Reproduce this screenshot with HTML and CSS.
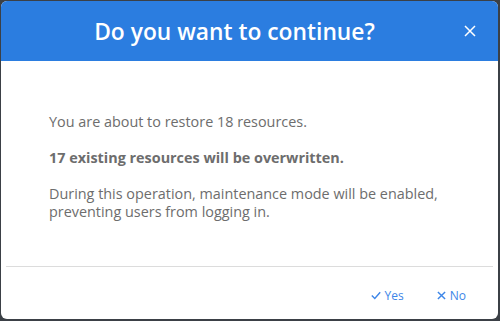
FILE: index.html
```html
<!DOCTYPE html>
<html>
<head>
<meta charset="utf-8">
<link rel="stylesheet" href="styles.css">
</head>
<body>
<div class="dialog">
  <div class="header">
    <div class="title">Do you want to continue?</div>
    <button class="close" aria-label="Close">
      <svg width="12" height="12" viewBox="0 0 12 12"><path d="M1 1L11 11M11 1L1 11" stroke="#fff" stroke-width="1.5" fill="none"/></svg>
    </button>
  </div>
  <div class="content">
    <p>You are about to restore 18 resources.</p>
    <p class="strong">17 existing resources will be overwritten.</p>
    <p>During this operation, maintenance mode will be enabled, preventing users from logging in.</p>
  </div>
  <div class="footer">
    <button class="btn">
      <svg width="10" height="9" viewBox="0 0 10 9"><path d="M0.8 4.5L3.8 7.5L9.2 1.2" stroke="currentColor" stroke-width="1.4" fill="none"/></svg>
      Yes
    </button>
    <button class="btn">
      <svg width="9" height="9" viewBox="0 0 10 10"><path d="M1 1L9 9M9 1L1 9" stroke="currentColor" stroke-width="1.6" fill="none"/></svg>
      No
    </button>
  </div>
</div>
</body>
</html>
```

FILE: styles.css
```css
html, body {
  margin: 0;
  padding: 0;
  height: 100%;
}
body {
  background: #3b4046;
  font-family: "Open Sans", "Noto Sans", sans-serif;
  padding: 1px 2px 2px 1px;
  box-sizing: border-box;
}
.dialog {
  height: 100%;
  background: #fff;
  border-radius: 6px;
  overflow: hidden;
  display: flex;
  flex-direction: column;
}
.header {
  background: #2b7de0;
  height: 60px;
  display: flex;
  align-items: center;
  justify-content: center;
  position: relative;
  flex: none;
}
.title {
  color: #fff;
  font-size: 22.8px;
  font-weight: 600;
  margin-left: -30px;
}
.close {
  position: absolute;
  right: 22px;
  top: 24px;
  background: none;
  border: 0;
  padding: 0;
  width: 12px;
  height: 12px;
  display: flex;
}
.content {
  flex: 1;
  padding: 52px 43px 0 43px;
  color: #6d6d6d;
  font-size: 14.4px;
  line-height: 18px;
  border-bottom: 1px solid #dcdcdc;
  margin: 0 5px;
}
.content p {
  margin: 0 0 18px 0;
}
.content .strong {
  font-weight: 700;
}
.footer {
  height: 52px;
  box-sizing: border-box;
  flex: none;
  display: flex;
  justify-content: flex-end;
  align-items: center;
  gap: 33px;
  padding: 4px 32px 0 0;
}
.btn {
  background: none;
  border: 0;
  padding: 0;
  color: #3d86e8;
  font-family: inherit;
  font-size: 12px;
  display: flex;
  align-items: center;
  gap: 4px;
}
```
